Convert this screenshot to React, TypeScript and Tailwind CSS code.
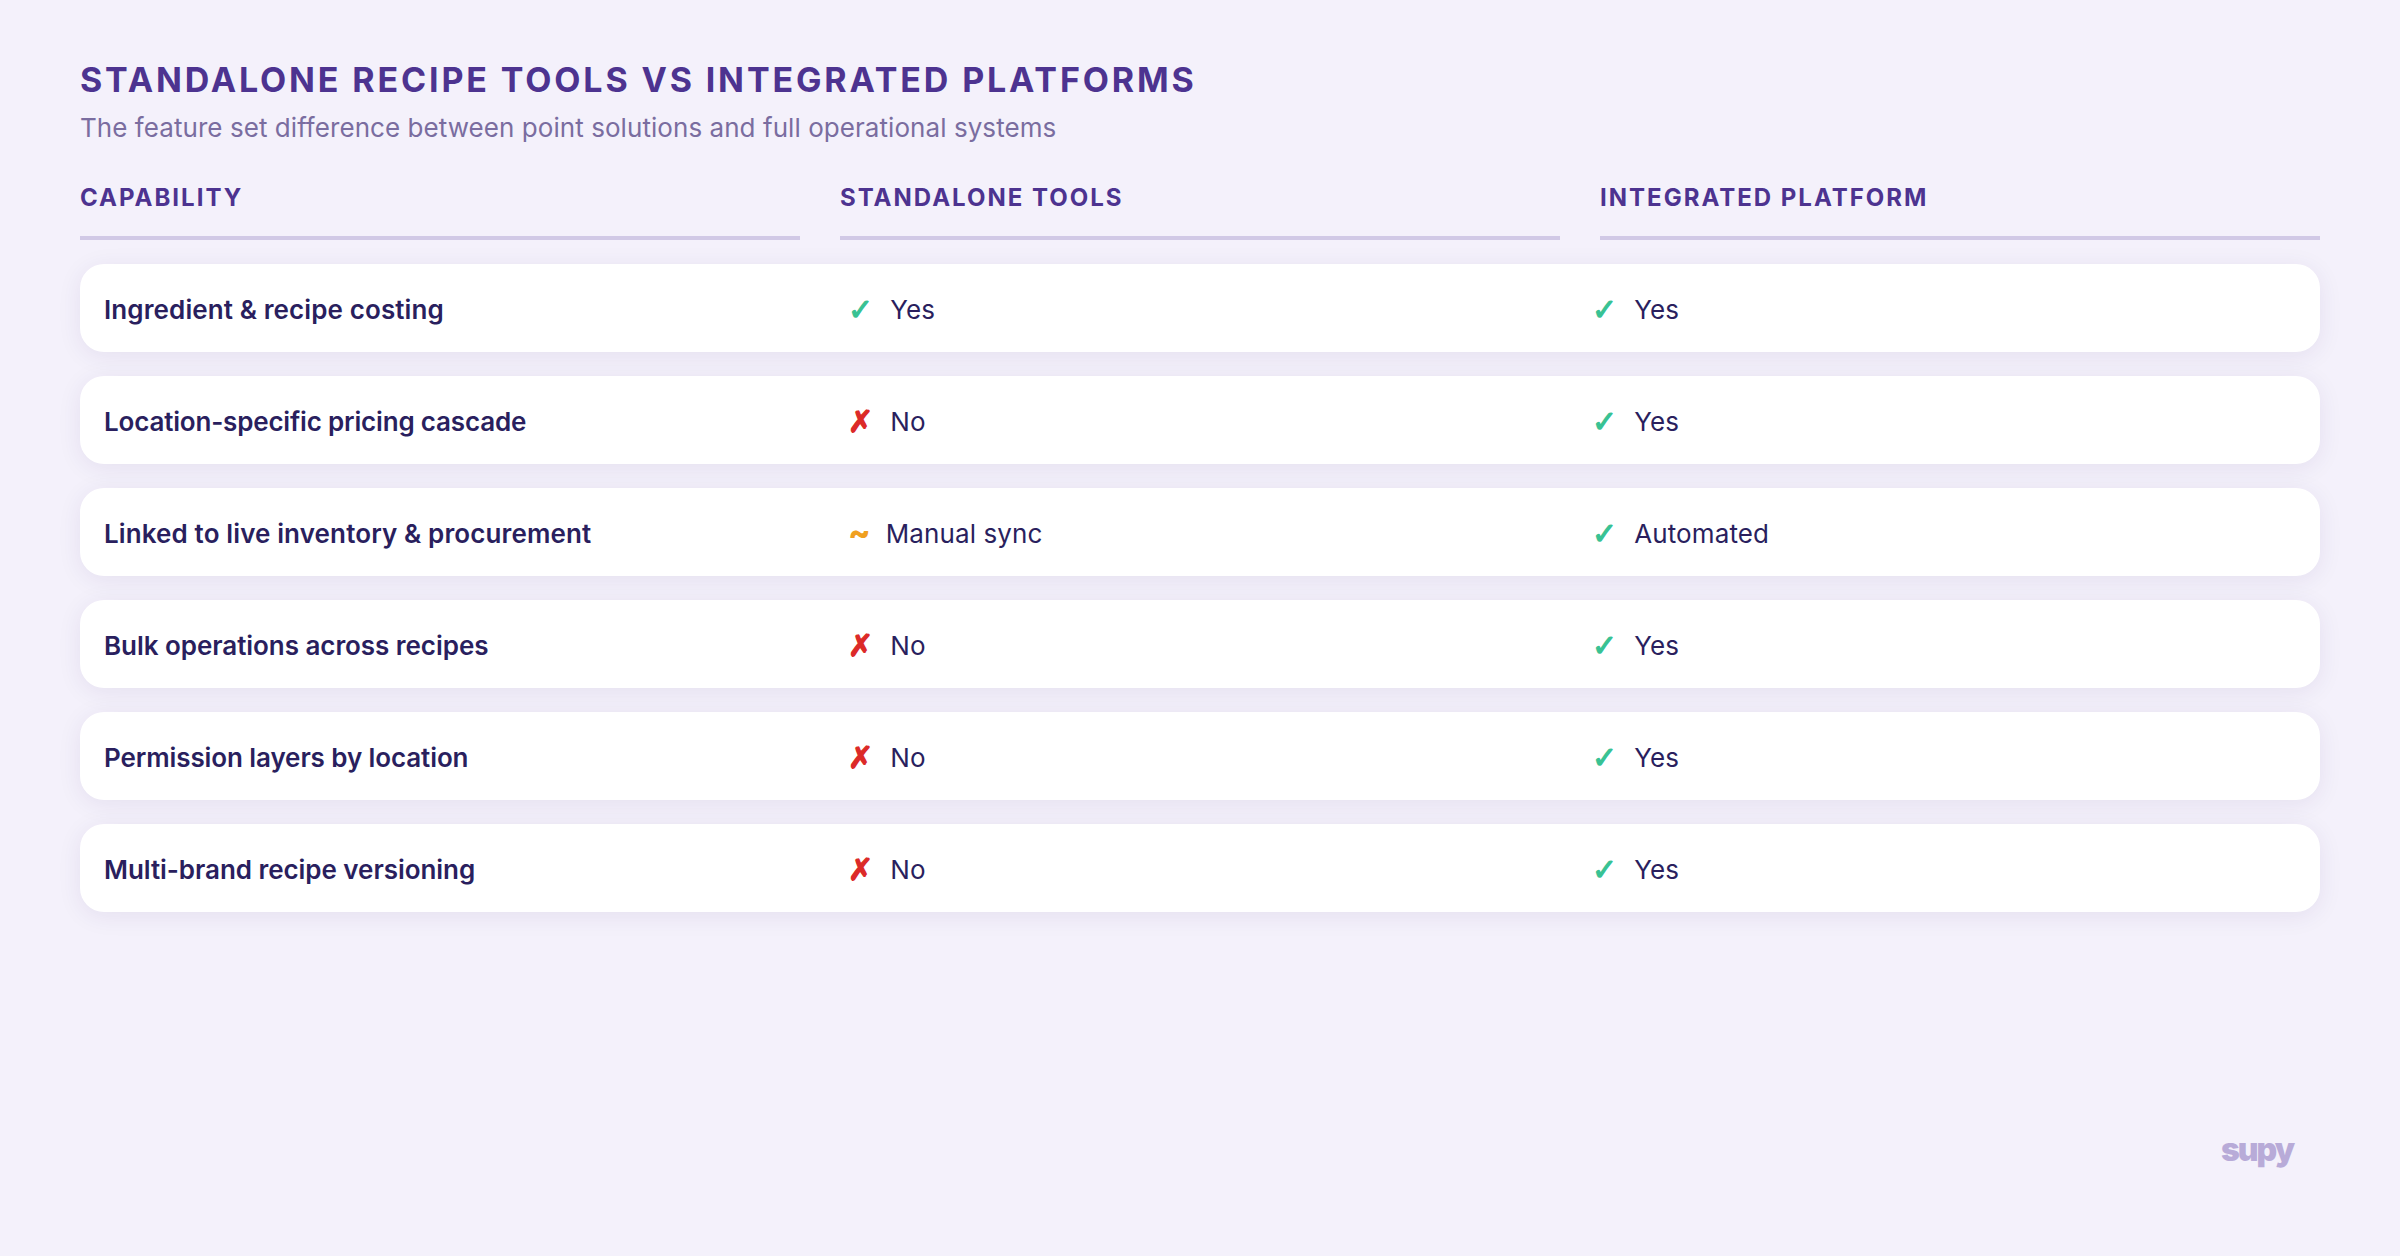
const rows: [string, string, string, string, string, string][] = [
  ["Ingredient & recipe costing", "tracking-[0.11px]", "y", "Yes", "y", "Yes"],
  ["Location-specific pricing cascade", "tracking-[-0.18px]", "n", "No", "y", "Yes"],
  ["Linked to live inventory & procurement", "tracking-[0.12px]", "p", "Manual sync", "y", "Automated"],
  ["Bulk operations across recipes", "tracking-[-0.05px]", "n", "No", "y", "Yes"],
  ["Permission layers by location", "tracking-[-0.1px]", "n", "No", "y", "Yes"],
  ["Multi-brand recipe versioning", "tracking-[-0.05px]", "n", "No", "y", "Yes"],
];

function Status({ kind, text }: { kind: string; text: string }) {
  return (
    <div className="flex items-center text-[26px] font-normal tracking-[0.1px] text-[#2a1f5e]">
      {kind === "y" && (
        <span className="mr-[17px] font-['DejaVu_Sans',sans-serif] text-[30px] font-bold text-[#38c293] [-webkit-text-stroke:1.2px_#38c293]">
          ✓
        </span>
      )}
      {kind === "n" && (
        <span className="mr-[17px] font-['DejaVu_Sans',sans-serif] text-[30px] font-bold text-[#dc2a28] [-webkit-text-stroke:1.4px_#dc2a28]">
          ✗
        </span>
      )}
      {kind === "p" && <span className="mr-[15px] text-[33px] font-extrabold text-[#f0a020]">~</span>}
      <span>{text}</span>
    </div>
  );
}

export default function App() {
  return (
    <div className="relative flex h-[1256px] w-[2400px] flex-col overflow-hidden bg-[#f4f1fb] px-[80px] pt-[56px] font-['Inter',sans-serif]">
      <h1 className="text-[34px] leading-[48px] font-bold tracking-[2.86px] text-[#4d3390]">
        STANDALONE RECIPE TOOLS VS INTEGRATED PLATFORMS
      </h1>
      <p className="mt-[4px] text-[26px] leading-[40px] tracking-[0.06px] text-[#7a6da0]">
        The feature set difference between point solutions and full operational systems
      </p>
      <div className="mt-[24px] grid grid-cols-3 gap-x-[40px]">
        {["CAPABILITY", "STANDALONE TOOLS", "INTEGRATED PLATFORM"].map((h) => (
          <div
            key={h}
            className="border-b-[4px] border-[#d1c9e6] pt-[6px] pb-[18px] text-[24px] leading-[40px] font-bold tracking-[2px] text-[#4d3390]"
          >
            {h}
          </div>
        ))}
      </div>
      <div className="mt-[24px] flex flex-col gap-[24px]">
        {rows.map((r) => (
          <div
            key={r[0]}
            className="grid h-[88px] grid-cols-3 items-center gap-x-[40px] rounded-[24px] bg-white px-[24px] pt-[2px] shadow-[0_4px_24px_rgba(45,27,105,0.08)]"
          >
            <div className={`text-[26px] font-semibold text-[#2a1f5e] ${r[1]}`}>{r[0]}</div>
            <Status kind={r[2]} text={r[3]} />
            <Status kind={r[4]} text={r[5]} />
          </div>
        ))}
      </div>
      <div className="absolute top-[1128px] left-[2221px] text-[32px] leading-[44px] font-black tracking-[-2px] text-[#b8abd8]">
        supy
      </div>
    </div>
  );
}
